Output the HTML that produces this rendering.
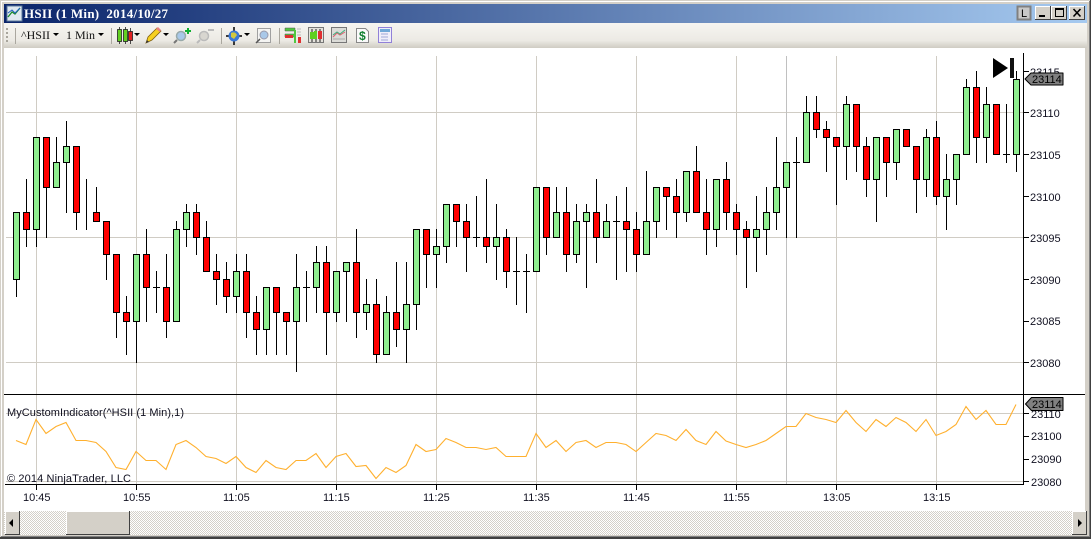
<!DOCTYPE html>
<html><head><meta charset="utf-8"><title>HSII (1 Min)</title>
<style>
html,body{margin:0;padding:0;background:#d4d0c8;width:1091px;height:539px;overflow:hidden}
svg{display:block}
text{font-family:"Liberation Sans",Arial,sans-serif;font-size:11px;fill:#101020}
.t{font-family:"Liberation Serif",serif;font-weight:bold;font-size:13px;fill:#fff}
.b{font-family:"Liberation Serif",serif;font-size:12px;fill:#111}
</style></head><body>
<svg width="1091" height="539" viewBox="0 0 1091 539" xmlns="http://www.w3.org/2000/svg">
<defs>
<linearGradient id="tg" x1="0" x2="1" y1="0" y2="0"><stop offset="0" stop-color="#0a246a"/><stop offset="1" stop-color="#a6caf0"/></linearGradient>
<linearGradient id="bg" x1="0" x2="0" y1="0" y2="1"><stop offset="0" stop-color="#f6f5f1"/><stop offset=".7" stop-color="#eceae4"/><stop offset="1" stop-color="#cfccc3"/></linearGradient>
<pattern id="dith" width="2" height="2" patternUnits="userSpaceOnUse"><rect width="2" height="2" fill="#fff"/><rect width="1" height="1" fill="#d4d0c8"/><rect x="1" y="1" width="1" height="1" fill="#d4d0c8"/></pattern>
</defs>
<!-- frame -->
<rect width="1091" height="539" fill="#d4d0c8"/>
<rect x="1" y="1" width="1088" height="1" fill="#fff"/>
<rect x="1" y="1" width="1" height="536" fill="#fff"/>
<rect x="0" y="537" width="1091" height="2" fill="#404040"/>
<rect x="1" y="536" width="1089" height="1" fill="#808080"/>
<rect x="1090" y="0" width="1" height="539" fill="#404040"/>
<rect x="1089" y="1" width="1" height="536" fill="#808080"/>
<!-- title -->
<rect x="4" y="4" width="1083" height="19" fill="url(#tg)"/>
<rect x="7" y="6" width="15" height="15" fill="#dfe8f0" stroke="#5d7a9c"/>
<path d="M8 17l4-5 3 2 5-6" fill="none" stroke="#1a8a2a" stroke-width="1.3"/>
<path d="M8 13l4-3 3 3 5-5" fill="none" stroke="#2060c0"/>
<text class="t" x="24" y="18" xml:space="preserve" textLength="144">HSII (1 Min)  2014/10/27</text>
<!-- window buttons -->
<rect x="1017.5" y="6.5" width="13" height="13" fill="#c8c8c8" stroke="#808080" stroke-width="2"/>
<text x="1021" y="17" style="font-size:11px;fill:#000">L</text>
<g shape-rendering="crispEdges">
<rect x="1035.5" y="6.5" width="15" height="13" fill="#d4d0c8" stroke="#404040"/><path d="M1035.5 19V6.5H1050" stroke="#fff" fill="none"/>
<rect x="1051.5" y="6.5" width="15" height="13" fill="#d4d0c8" stroke="#404040"/><path d="M1051.5 19V6.5H1066" stroke="#fff" fill="none"/>
<rect x="1069.5" y="6.5" width="15" height="13" fill="#d4d0c8" stroke="#404040"/><path d="M1069.5 19V6.5H1084" stroke="#fff" fill="none"/>
<rect x="1039" y="15" width="6" height="2" fill="#000"/>
<rect x="1055.5" y="8.5" width="8" height="8" fill="none" stroke="#000"/><rect x="1055" y="8" width="9" height="2" fill="#000"/>
</g>
<path d="M1073.5 9l7 7.5M1080.5 9l-7 7.5" stroke="#000" stroke-width="1.6"/>
<!-- toolbar -->
<rect x="4" y="23" width="1083" height="25" fill="url(#bg)"/>
<g fill="#a8a59c"><rect x="6" y="28" width="2" height="2"/><rect x="6" y="32" width="2" height="2"/><rect x="6" y="36" width="2" height="2"/><rect x="6" y="40" width="2" height="2"/></g>
<g fill="#aaa79f"><rect x="15" y="28" width="1" height="16"/><rect x="111" y="28" width="1" height="16"/><rect x="221" y="28" width="1" height="16"/><rect x="279" y="28" width="1" height="16"/></g>
<text class="b" x="21" y="39">^HSII</text><path d="M53 33h6l-3 3z" fill="#000"/>
<text class="b" x="66" y="39">1 Min</text><path d="M98 33h6l-3 3z" fill="#000"/>
<!-- candle icon -->
<g stroke="#222" stroke-width=".8"><path d="M119.500 27v17M125.500 27v17M130.500 28v16"/><rect x="117.500" y="29.500" width="4" height="12" fill="#62d020"/><rect x="123.500" y="29.500" width="4" height="12" fill="#62d020"/><rect x="128.500" y="31.500" width="4" height="9" fill="#e02020"/></g>
<path d="M134 33h6l-3 3z" fill="#000"/>
<!-- pencil -->
<path d="M146 43l2-6 9-9 4 3-9 9z" fill="#f6d020" stroke="#806010" stroke-width=".8"/><path d="M156 29l4 3 1-2-3-3z" fill="#e88080"/><path d="M146 43l1-3 2 2z" fill="#333"/>
<path d="M163 33h6l-3 3z" fill="#000"/>
<!-- zoom + -->
<circle cx="181" cy="36" r="4.500" fill="#a9c8e8" stroke="#9aa" stroke-width="1.500"/><path d="M177 40l-3 3" stroke="#777" stroke-width="2"/><path d="M188 28v6M185 31h6" stroke="#10b030" stroke-width="2"/>
<!-- zoom - -->
<circle cx="204" cy="36" r="4.500" fill="#d8d6d0" stroke="#bbb" stroke-width="1.500"/><path d="M200 40l-3 3" stroke="#bbb" stroke-width="2"/><path d="M208 30h6" stroke="#bbb" stroke-width="2"/>
<!-- globe -->
<path d="M234 27v18M226 36h16" stroke="#000" stroke-width="1.500"/><circle cx="234" cy="36" r="5.500" fill="#3a78d8"/><path d="M231 33q4-2 6 2l-3 4-3-2z" fill="#d0c840"/>
<path d="M244 33h6l-3 3z" fill="#000"/>
<!-- find box -->
<rect x="257.500" y="28.500" width="13" height="14" fill="#f4f4f2" stroke="#a0a0a0"/><circle cx="264" cy="35" r="4" fill="#a9c8e8" stroke="#99a"/><path d="M260 39l-4 4" stroke="#555" stroke-width="1.500"/>
<!-- data series icons -->
<path d="M285 28h10v3h-10zM285 34h10v3h-10z" fill="#50c840" stroke="#555" stroke-width=".5"/><path d="M285 35h8v3h-8z" fill="#e03030"/><rect x="294" y="30" width="2" height="13" fill="#50c840"/><rect x="298" y="37" width="3" height="6" fill="#e03030"/><path d="M297 29h4M297 32h4M297 35h4" stroke="#bbb"/>
<rect x="308.500" y="27.500" width="15" height="15" fill="#e4e2dc" stroke="#777"/><path d="M312 29v13M316 29v13M320 29v13" stroke="#222"/><rect x="310" y="32" width="4" height="7" fill="#60d020"/><rect x="314" y="31" width="3" height="8" fill="#60d020"/><rect x="318" y="31" width="4" height="8" fill="#e03030"/>
<rect x="331.500" y="27.500" width="15" height="15" fill="#dcdcd8" stroke="#777"/><path d="M333 37l4-4 3 2 5-3" fill="none" stroke="#e06070"/><path d="M333 35l4-3 3 2 5-4" fill="none" stroke="#40b080"/><path d="M333 39h12" stroke="#aaa"/>
<path d="M356.500 28.500h9l3 3v11h-12z" fill="#fafafa" stroke="#888"/><text x="359" y="40" style="font-size:12px;font-weight:bold;fill:#108030">$</text>
<rect x="378.500" y="27.500" width="13" height="15" fill="#f0eefa" stroke="#9080d8"/><rect x="380" y="29" width="10" height="3" fill="#70a8d8"/><path d="M381 34h7M381 37h7M381 40h7" stroke="#a0a8d8"/>
<!-- chart area -->
<rect x="4" y="48" width="1081" height="463" fill="#fff"/>
<g shape-rendering="crispEdges" fill="none">
<path d="M6 112.500H1023M6 237.500H1023M6 362.500H1023M6 413.500H1023M6 481.500H1023" stroke="#d0ccc4"/>
<path d="M36.500 56V484M136.500 56V484M236.500 56V484M336.500 56V484M436.500 56V484M536.500 56V484M636.500 56V484M736.500 56V484M836.500 56V484M936.500 56V484" stroke="#d0ccc4"/>
<path d="M786.500 56V484" stroke="#c0c0c0"/>
<path d="M4 394.500H1085M5 484.500H1024M1023.500 53V485" stroke="#000"/>
<path d="M1024 71.500h5M1024 112.500h5M1024 154.500h5M1024 196.500h5M1024 237.500h5M1024 279.500h5M1024 321.500h5M1024 362.500h5M1024 413.500h5M1024 436.500h5M1024 459.500h5M1024 481.500h5" stroke="#000"/>
<path d="M36.500 485v5M136.500 485v5M236.500 485v5M336.500 485v5M436.500 485v5M536.500 485v5M636.500 485v5M736.500 485v5M836.500 485v5M936.500 485v5" stroke="#000"/>
<!-- wicks -->
<path stroke="#000" d="M16.500 212V297M26.500 179V247M36.500 137V247M46.500 137V238M56.500 137V188M66.500 121V213M76.500 146V230M86.500 179V230M96.500 187V222M106.500 221V280M116.500 254V338M126.500 296V355M136.500 254V363M146.500 229V322M156.500 271V313M166.500 254V338M176.500 221V322M186.500 204V247M196.500 204V255M206.500 221V272M216.500 254V305M226.500 262V313M236.500 254V313M246.500 254V338M256.500 296V355M266.500 287V355M276.500 287V355M286.500 312V355M296.500 254V372M306.500 271V322M316.500 246V313M326.500 246V355M336.500 271V322M346.500 262V322M356.500 229V338M366.500 279V330M376.500 279V363M386.500 296V355M396.500 262V347M406.500 262V363M416.500 229V330M426.500 229V288M436.500 229V288M446.500 204V263M456.500 204V247M466.500 204V272M476.500 196V247M486.500 179V263M496.500 204V280M506.500 229V288M516.500 237V305M526.500 254V313M536.500 187V272M546.500 187V255M556.500 187V238M566.500 187V272M576.500 204V263M586.500 204V288M596.500 179V263M606.500 204V238M616.500 196V280M626.500 187V272M636.500 212V272M646.500 171V255M656.500 187V238M666.500 187V230M676.500 179V238M686.500 171V222M696.500 146V213M706.500 179V255M716.500 179V247M726.500 162V230M736.500 204V255M746.500 221V288M756.500 196V272M766.500 187V255M776.500 137V230M786.500 162V238M796.500 137V238M806.500 96V163M816.500 96V138M826.500 121V172M836.500 137V205M846.500 96V180M856.500 104V172M866.500 137V197M876.500 137V222M886.500 137V197M896.500 129V180M906.500 129V147M916.500 146V213M926.500 129V197M936.500 121V205M946.500 154V230M956.500 154V205M966.500 79V155M976.500 71V163M986.500 87V163M996.500 104V155M1006.500 104V163M1016.500 71V172"/>
<path stroke="#000" d="M13 212.500h7M153 287.500h7M303 287.500h7M473 237.500h7M513 271.500h7M523 271.500h7M613 221.500h7M793 162.500h7M1003 154.500h7"/>
<!-- green bodies -->
<path fill="#90ee90" stroke="#000" d="M13.500 212.500h6V279.500h-6zM33.500 137.500h6V229.500h-6zM53.500 162.500h6V187.500h-6zM63.500 146.500h6V162.500h-6zM133.500 254.500h6V321.500h-6zM173.500 229.500h6V321.500h-6zM183.500 212.500h6V229.500h-6zM233.500 271.500h6V296.500h-6zM263.500 287.500h6V329.500h-6zM293.500 287.500h6V321.500h-6zM313.500 262.500h6V287.500h-6zM333.500 271.500h6V312.500h-6zM343.500 262.500h6V271.500h-6zM363.500 304.500h6V312.500h-6zM383.500 312.500h6V354.500h-6zM403.500 304.500h6V329.500h-6zM413.500 229.500h6V304.500h-6zM433.500 246.500h6V254.500h-6zM443.500 204.500h6V246.500h-6zM493.500 237.500h6V246.500h-6zM533.500 187.500h6V271.500h-6zM553.500 212.500h6V237.500h-6zM573.500 221.500h6V254.500h-6zM583.500 212.500h6V221.500h-6zM603.500 221.500h6V237.500h-6zM643.500 221.500h6V254.500h-6zM653.500 187.500h6V221.500h-6zM683.500 171.500h6V212.500h-6zM713.500 179.500h6V229.500h-6zM753.500 229.500h6V237.500h-6zM763.500 212.500h6V229.500h-6zM773.500 187.500h6V212.500h-6zM783.500 162.500h6V187.500h-6zM803.500 112.500h6V162.500h-6zM843.500 104.500h6V146.500h-6zM873.500 137.500h6V179.500h-6zM893.500 129.500h6V162.500h-6zM923.500 137.500h6V179.500h-6zM943.500 179.500h6V196.500h-6zM953.500 154.500h6V179.500h-6zM963.500 87.500h6V154.500h-6zM983.500 104.500h6V137.500h-6zM1013.500 79.500h6V154.500h-6z"/>
<!-- red bodies -->
<path fill="#ff0000" stroke="#000" d="M23.500 212.500h6V229.500h-6zM43.500 137.500h6V187.500h-6zM73.500 146.500h6V212.500h-6zM93.500 212.500h6V221.500h-6zM103.500 221.500h6V254.500h-6zM113.500 254.500h6V312.500h-6zM123.500 312.500h6V321.500h-6zM143.500 254.500h6V287.500h-6zM163.500 287.500h6V321.500h-6zM193.500 212.500h6V237.500h-6zM203.500 237.500h6V271.500h-6zM213.500 271.500h6V279.500h-6zM223.500 279.500h6V296.500h-6zM243.500 271.500h6V312.500h-6zM253.500 312.500h6V329.500h-6zM273.500 287.500h6V312.500h-6zM283.500 312.500h6V321.500h-6zM323.500 262.500h6V312.500h-6zM353.500 262.500h6V312.500h-6zM373.500 304.500h6V354.500h-6zM393.500 312.500h6V329.500h-6zM423.500 229.500h6V254.500h-6zM453.500 204.500h6V221.500h-6zM463.500 221.500h6V237.500h-6zM483.500 237.500h6V246.500h-6zM503.500 237.500h6V271.500h-6zM543.500 187.500h6V237.500h-6zM563.500 212.500h6V254.500h-6zM593.500 212.500h6V237.500h-6zM623.500 221.500h6V229.500h-6zM633.500 229.500h6V254.500h-6zM663.500 187.500h6V196.500h-6zM673.500 196.500h6V212.500h-6zM693.500 171.500h6V212.500h-6zM703.500 212.500h6V229.500h-6zM723.500 179.500h6V212.500h-6zM733.500 212.500h6V229.500h-6zM743.500 229.500h6V237.500h-6zM813.500 112.500h6V129.500h-6zM823.500 129.500h6V137.500h-6zM833.500 137.500h6V146.500h-6zM853.500 104.500h6V146.500h-6zM863.500 146.500h6V179.500h-6zM883.500 137.500h6V162.500h-6zM903.500 129.500h6V146.500h-6zM913.500 146.500h6V179.500h-6zM933.500 137.500h6V196.500h-6zM973.500 87.500h6V137.500h-6zM993.500 104.500h6V154.500h-6z"/>
</g>
<!-- indicator -->
<polyline fill="none" stroke="#ffb02e" stroke-width="1.100" points="16,440.500 26,444.500 36,419.500 46,433.500 56,426.500 66,422.500 76,440.500 86,440.500 96,442.500 106,451.500 116,467.500 126,469.500 136,451.500 146,460.500 156,460.500 166,469.500 176,444.500 186,440.500 196,447.500 206,456.500 216,458.500 226,463.500 236,456.500 246,467.500 256,472.500 266,460.500 276,467.500 286,469.500 296,460.500 306,460.500 316,453.500 326,467.500 336,456.500 346,453.500 356,466.500 366,465.500 376,478.500 386,467.500 396,472.500 406,465.500 416,444.500 426,451.500 436,449.500 446,438.500 456,442.500 466,447.500 476,447.500 486,449.500 496,447.500 506,456.500 516,456.500 526,456.500 536,433.500 546,447.500 556,440.500 566,451.500 576,442.500 586,440.500 596,447.500 606,442.500 616,442.500 626,444.500 636,451.500 646,442.500 656,433.500 666,435.500 676,440.500 686,429.500 696,440.500 706,444.500 716,431.500 726,441 736,444.500 746,447.500 756,444.500 766,440.500 776,433.500 786,426.500 796,426.500 806,413.500 816,417.500 826,419.500 836,422.500 846,410.500 856,422.500 866,431.500 876,419.500 886,426.500 896,417.500 906,422.500 916,431.500 926,419.500 936,435.500 946,431.500 956,424.500 966,406.500 976,419.500 986,410.500 996,424.500 1006,424.500 1016,404.500"/>
<!-- axis labels -->
<text x="1030" y="76">23115</text>
<text x="1030" y="117">23110</text>
<text x="1030" y="159">23105</text>
<text x="1030" y="201">23100</text>
<text x="1030" y="242">23095</text>
<text x="1030" y="284">23090</text>
<text x="1030" y="325">23085</text>
<text x="1030" y="367">23080</text>
<text x="1031" y="418">23110</text>
<text x="1031" y="440">23100</text>
<text x="1031" y="463">23090</text>
<text x="1031" y="486">23080</text>
<text x="23" y="501">10:45</text>
<text x="123" y="501">10:55</text>
<text x="223" y="501">11:05</text>
<text x="323" y="501">11:15</text>
<text x="423" y="501">11:25</text>
<text x="523" y="501">11:35</text>
<text x="623" y="501">11:45</text>
<text x="723" y="501">11:55</text>
<text x="823" y="501">13:05</text>
<text x="923" y="501">13:15</text>
<text x="7" y="416" textLength="177">MyCustomIndicator(^HSII (1 Min),1)</text>
<text x="7" y="482" textLength="124">© 2014 NinjaTrader, LLC</text>
<!-- price tags -->
<path d="M1025 79l6-6h32v12h-32z" fill="#808080" stroke="#000" stroke-linejoin="round"/>
<text x="1032" y="83" style="fill:#000">23114</text>
<path d="M1025.500 404l6-6.500h31.500v13h-31.500z" fill="#808080" stroke="#000" stroke-linejoin="round"/>
<text x="1032" y="408" style="fill:#000">23114</text>
<!-- play marker -->
<path d="M993 58l15 10-15 10z" fill="#000"/><rect x="1010" y="58" width="4" height="20" fill="#111"/>
<!-- scrollbar -->
<rect x="4" y="511" width="1083" height="24" fill="url(#dith)" shape-rendering="crispEdges"/>
<g shape-rendering="crispEdges">
<rect x="5" y="511" width="15" height="24" fill="#d4d0c8"/><path d="M5.500 534V511.500H19" stroke="#fff" fill="none"/><path d="M19.500 511V534.500H5" stroke="#404040" fill="none"/>
<rect x="66" y="511" width="64" height="24" fill="#d4d0c8"/><path d="M66.500 534V511.500H129" stroke="#fff" fill="none"/><path d="M129.500 511V534.500H66" stroke="#404040" fill="none"/>
<rect x="1072" y="511" width="15" height="24" fill="#d4d0c8"/><path d="M1072.500 534V511.500H1086" stroke="#fff" fill="none"/><path d="M1086.500 511V534.500H1072" stroke="#404040" fill="none"/>
</g>
<path d="M9 523l4-4v8z" fill="#000"/><path d="M1082 523l-4-4v8z" fill="#000"/>
</svg>
</body></html>
